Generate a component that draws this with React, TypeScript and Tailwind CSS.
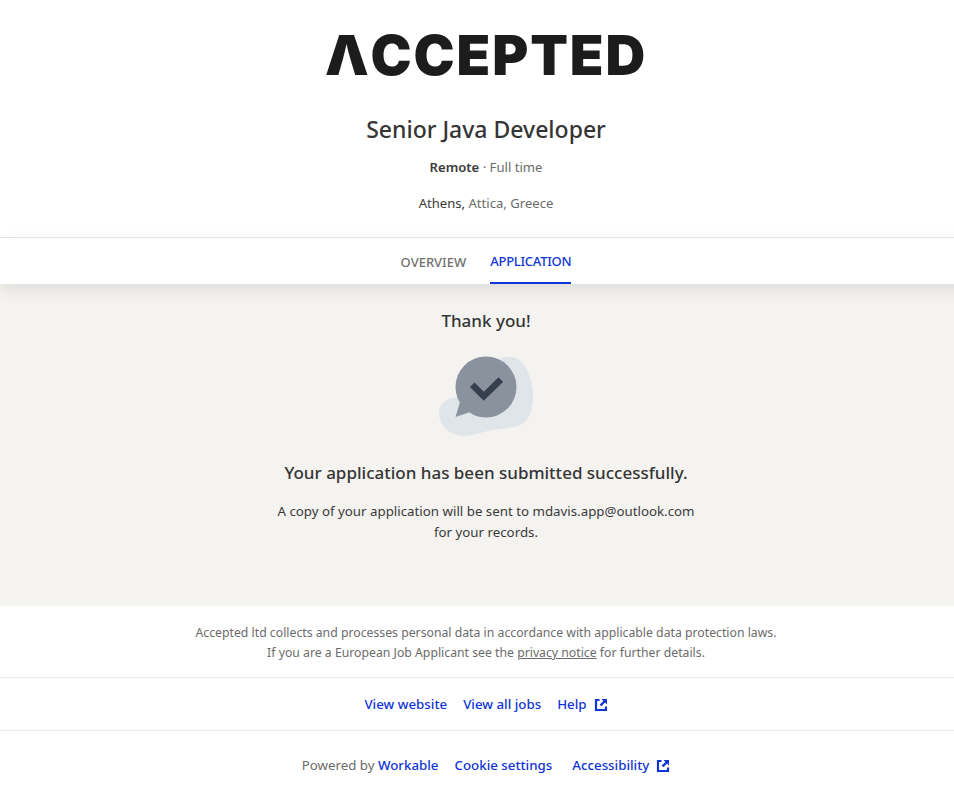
function LinkOut() {
  return (
    <svg width="14" height="14" viewBox="0 0 14 14" className="ml-[7px] inline-block" fill="none">
      <path d="M5.5 2H2v10h10V8.5" stroke="#0f35d6" strokeWidth="2.2" />
      <path d="M7.5 1h5.5v5.5l-1.9-1.9-3.7 3.7-1.7-1.7 3.7-3.7z" fill="#0f35d6" />
    </svg>
  );
}

function ChatCheck() {
  return (
    <svg width="100" height="84" viewBox="0 0 100 84" fill="none">
      <path
        d="M3 59C3 50 11 44 21 43L64 5C68 3 72 2.5 76 3C86 4 92 16 95 26C98 36 98 50 94 60C90 70 82 73 72 74C62 75 56 76 48 78C40 80 34 82 27 82C14 81 3 72 3 59Z"
        fill="#e0e5ea"
      />
      <circle cx="50" cy="33" r="30.5" fill="#8a929e" />
      <path d="M24 48L19.5 63L34 58Z" fill="#8a929e" />
      <path d="M36.2 30.7L47.8 42.3L64.8 25.7" stroke="#36404d" strokeWidth="6.5" />
    </svg>
  );
}

export default function App() {
  return (
    <div className="h-[799px] overflow-hidden bg-white">
      <div className="w-[972px] font-['Noto_Sans',sans-serif] text-[#3a3a3a]">
        <header className="flex h-[237px] flex-col items-center">
          <div className="mt-[17px] h-[76px] font-['Inter',sans-serif] text-[55px] leading-[76px] font-black tracking-[1.9px] text-[#1c1c1c] blur-[0.4px]">
            ΛCCEPTED
          </div>
          <h1 className="mt-[20px] text-[23px] leading-[32px] font-medium text-[#353535]">Senior Java Developer</h1>
          <p className="mt-[12px] text-[13.1px] leading-5 text-[#6b6b6b]">
            <span className="font-semibold text-[#3a3a3a]">Remote</span> · Full time
          </p>
          <p className="mt-[16px] text-[13.1px] leading-5 text-[#6b6b6b]">
            <span className="text-[#3a3a3a]">Athens,</span> Attica, Greece
          </p>
        </header>

        <nav className="relative z-10 flex h-[47px] justify-center gap-6 border-t border-[#e4e4e4] bg-white shadow-[0_6px_16px_rgba(0,0,0,0.09)]">
          <a className="flex items-center pt-[4px] text-[13px] font-medium text-[#717171]">OVERVIEW</a>
          <a className="flex items-center border-b-2 border-[#0f35d6] pt-[4px] text-[13px] font-medium tracking-[-0.25px] text-[#0f35d6]">APPLICATION</a>
        </nav>

        <main className="flex h-[322px] flex-col items-center bg-[#f4f3f0]">
          <h2 className="mt-[25px] text-[17px] leading-6 font-medium text-[#353535]">Thank you!</h2>
          <div className="mt-[21px] h-[84px]">
            <ChatCheck />
          </div>
          <h3 className="mt-[23px] text-[17px] leading-6 font-medium text-[#353535]">Your application has been submitted successfully.</h3>
          <p className="mt-[16px] text-center text-[13.3px] leading-[21px] text-[#3a3a3a]">
            A copy of your application will be sent to mdavis.app@outlook.com
            <br />
            for your records.
          </p>
        </main>

        <section className="flex h-[72px] flex-col items-center justify-center border-b border-[#e8e8e8] pt-[3px] text-[12.25px] leading-5 text-[#6b6b6b]">
          <p>Accepted ltd collects and processes personal data in accordance with applicable data protection laws.</p>
          <p>
            If you are a European Job Applicant see the <a className="underline">privacy notice</a> for further details.
          </p>
        </section>

        <div className="flex h-[53px] items-center justify-center gap-4 border-b border-[#e8e8e8] pt-[2px] text-[13.3px] font-medium text-[#0f35d6]">
          <a>View website</a>
          <a>View all jobs</a>
          <a className="flex items-center">
            Help
            <LinkOut />
          </a>
        </div>

        <footer className="flex h-[69px] items-center justify-center text-[13.3px] font-medium text-[#0f35d6]">
          <span className="font-normal text-[#6b6b6b]">Powered by&nbsp;</span>
          <a>Workable</a>
          <a className="ml-4">Cookie settings</a>
          <a className="ml-5 flex items-center">
            Accessibility
            <LinkOut />
          </a>
        </footer>
      </div>
    </div>
  );
}
